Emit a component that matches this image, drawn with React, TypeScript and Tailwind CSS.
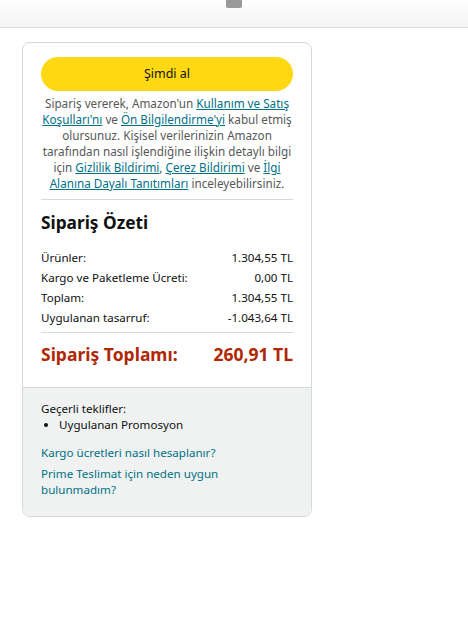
import React from 'react';

const link = 'text-[#007185] underline';

function Row({ label, value }: { label: string; value: string }) {
  return (
    <div className="flex justify-between h-[20px] items-center">
      <span>{label}</span>
      <span>{value}</span>
    </div>
  );
}

export default function App() {
  return (
    <div className="w-[468px] h-[621px] bg-white text-[#0f1111]" style={{ fontFamily: '"Noto Sans", Arial, sans-serif' }}>
      <div className="relative h-[28px] bg-gradient-to-b from-white to-[#f3f3f3] border-b border-[#dddddd]">
        <div className="absolute left-[226px] top-0 w-[16px] h-[8px] bg-[#999999] rounded-b-[2px]" />
      </div>
      <div className="pl-[22px] pt-[14px]">
        <div className="w-[290px] border border-[#d5d9d9] rounded-[8px] overflow-hidden">
          <div className="px-[18px] pt-[14px] pb-[21px]">
            <button className="w-full h-[34px] rounded-full bg-[#ffd814] text-[12.5px] text-[#0f1111]">Şimdi al</button>
            <p className="mt-[4px] text-center text-[11.7px] leading-[16px] text-[#565959] pb-[8px] border-b border-[#d5d9d9]">
              Sipariş vererek, Amazon'un <span className={link}>Kullanım ve Satış Koşulları'nı</span> ve{' '}
              <span className={link}>Ön Bilgilendirme'yi</span> kabul etmiş olursunuz. Kişisel verilerinizin Amazon
              tarafından nasıl işlendiğine ilişkin detaylı bilgi için <span className={link}>Gizlilik Bildirimi</span>,{' '}
              <span className={link}>Çerez Bildirimi</span> ve <span className={link}>İlgi Alanına Dayalı Tanıtımları</span>{' '}
              inceleyebilirsiniz.
            </p>
            <h2 className="mt-[11px] text-[17.3px] font-bold leading-[24px]">Sipariş Özeti</h2>
            <div className="mt-[13px] text-[11.6px] pb-[4px] border-b border-[#d5d9d9]">
              <Row label="Ürünler:" value="1.304,55 TL" />
              <Row label="Kargo ve Paketleme Ücreti:" value="0,00 TL" />
              <Row label="Toplam:" value="1.304,55 TL" />
              <Row label="Uygulanan tasarruf:" value="-1.043,64 TL" />
            </div>
            <div className="mt-[9px] flex justify-between text-[17.5px] font-bold leading-[24px] text-[#b12704]">
              <span>Sipariş Toplamı:</span>
              <span>260,91 TL</span>
            </div>
          </div>
          <div className="bg-[#f0f2f2] border-t border-[#d5d9d9] px-[18px] pt-[13px] pb-[18px] text-[11.6px]">
            <div className="leading-[16px]">Geçerli teklifler:</div>
            <ul className="list-disc pl-[18px] leading-[16px]">
              <li>Uygulanan Promosyon</li>
            </ul>
            <div className="mt-[12px] text-[#007185] leading-[16px]">Kargo ücretleri nasıl hesaplanır?</div>
            <div className="mt-[5px] text-[#007185] leading-[16px] w-[200px]">Prime Teslimat için neden uygun bulunmadım?</div>
          </div>
        </div>
      </div>
    </div>
  );
}
